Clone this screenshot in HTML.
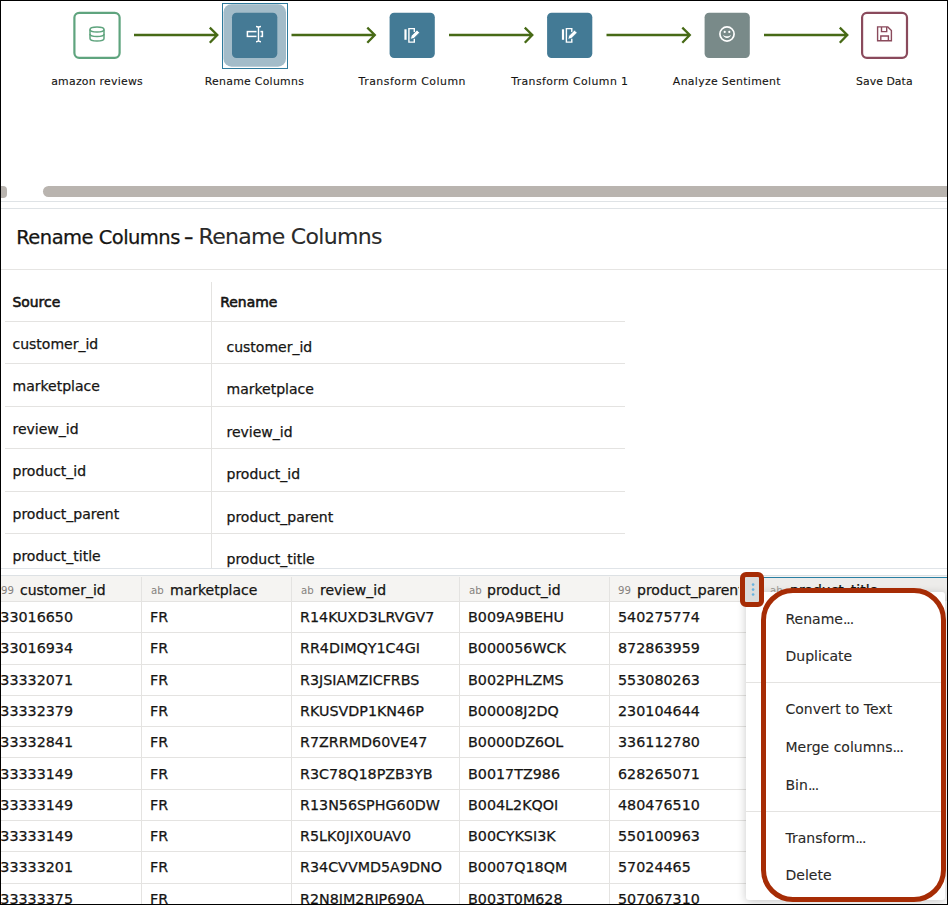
<!DOCTYPE html>
<html>
<head>
<meta charset="utf-8">
<title>Rename Columns</title>
<style>
html,body{margin:0;padding:0;}
body{width:948px;height:905px;position:relative;overflow:hidden;background:#fff;
  font-family:"DejaVu Sans","Liberation Sans",sans-serif;color:#161513;-webkit-text-stroke:0.250px #161513;}
#frame{position:absolute;left:0;top:0;width:946px;height:903px;border:1px solid #000;z-index:50;pointer-events:none;}
.abs{position:absolute;}
.node{position:absolute;top:13px;width:45px;height:45px;border-radius:5px;box-sizing:border-box;}
.node svg{position:absolute;left:0;top:0;}
.lbl{position:absolute;top:74px;width:160px;text-align:center;font-size:10.900px;-webkit-text-stroke:0.120px #161513;line-height:16px;white-space:nowrap;}
.arrow{position:absolute;top:25px;height:20px;}
.hl{position:absolute;height:1px;background:#dfe3e6;}
.src{position:absolute;left:12.500px;font-size:14px;line-height:18px;white-space:nowrap;}
.ren{position:absolute;left:226.500px;font-size:14px;line-height:18px;white-space:nowrap;}
.th{position:absolute;top:578px;height:24px;line-height:24px;font-size:14px;white-space:nowrap;}
.th i{font-style:normal;font-size:10px;color:#77736e;margin-right:6px;position:relative;top:-1px;}
.ti{position:absolute;top:579px;height:24px;line-height:24px;font-size:10.200px;color:#86827e;-webkit-text-stroke:0;white-space:nowrap;}
.td{position:absolute;font-size:14.300px;line-height:20px;white-space:nowrap;}
.vl{position:absolute;width:1px;background:#e4e3e1;top:577px;height:328px;}
.mi{position:absolute;left:785.500px;font-size:14px;line-height:20px;white-space:nowrap;color:#2a2927;-webkit-text-stroke:0.100px #2a2927;}
.el{letter-spacing:-1px;}
</style>
</head>
<body>
<div id="frame"></div>

<!-- flow nodes -->
<svg class="abs" style="left:0;top:0;" width="948" height="110" viewBox="0 0 948 110" fill="none">
<path d="M134.0 35H217.3M209.8 27.600l7.500 7.400-7.500 7.800" stroke="#476a16" stroke-width="2.300" stroke-linejoin="miter"/>
<path d="M291.5 35H374.8M367.3 27.600l7.500 7.400-7.500 7.800" stroke="#476a16" stroke-width="2.300" stroke-linejoin="miter"/>
<path d="M449.0 35H532.3M524.8 27.600l7.500 7.400-7.500 7.800" stroke="#476a16" stroke-width="2.300" stroke-linejoin="miter"/>
<path d="M606.5 35H689.8M682.3 27.600l7.500 7.400-7.500 7.800" stroke="#476a16" stroke-width="2.300" stroke-linejoin="miter"/>
<path d="M764.0 35H847.3M839.8 27.600l7.500 7.400-7.500 7.800" stroke="#476a16" stroke-width="2.300" stroke-linejoin="miter"/>
<rect x="74.400" y="12.800" width="45.200" height="45" rx="4.800" stroke="#5fa47e" stroke-width="2.200" fill="#fff"/>
<g stroke="#5fa47e" stroke-width="1.500"><ellipse cx="97" cy="29.600" rx="7" ry="2.500"/><path d="M90 29.600v9c0 1.400 3.100 2.500 7 2.500s7-1.100 7-2.500v-9"/><path d="M90 34c0 1.400 3.100 2.500 7 2.500s7-1.100 7-2.500"/></g>
<rect x="222.500" y="3.500" width="65" height="65" stroke="#2e7a9c" stroke-width="1"/>
<rect x="223.500" y="4.200" width="62.500" height="62.500" rx="8" fill="#a3bcc9"/>
<rect x="232" y="12.700" width="45.300" height="45.300" rx="4.500" fill="#457a95"/>
<g stroke="#fff" stroke-width="1.500"><rect x="247.400" y="31.600" width="15" height="4.800"/><path d="M258.500 27.500v13.200" stroke="#457a95" stroke-width="4"/><path d="M258.500 27.500v13.200M256 26.500c1.500 0 2.500 .4 2.500 1.400c0-1 1-1.400 2.500-1.400M256 41.700c1.500 0 2.500-.4 2.500-1.400c0 1 1 1.400 2.500 1.400" stroke-width="1.400"/></g>
<rect x="389.6" y="12.700" width="45.200" height="45.300" rx="4.500" fill="#437a95"/>
<g transform="translate(0.0 0)"><path d="M405.500 29.300v10.500" stroke="#fff" stroke-width="2.200"/><path d="M414.300 32v-3.400h-5.400v13.500h5.400v-3.300" stroke="#fff" stroke-width="1.400"/><path d="M410.300 39.300l1-3.500 5.700-5.700 2.600 2.600-5.700 5.700z" fill="#fff" stroke="#437a95" stroke-width="0.800"/></g>
<rect x="547.1" y="12.700" width="45.200" height="45.300" rx="4.500" fill="#437a95"/>
<g transform="translate(157.5 0)"><path d="M405.500 29.300v10.500" stroke="#fff" stroke-width="2.200"/><path d="M414.300 32v-3.400h-5.400v13.500h5.400v-3.300" stroke="#fff" stroke-width="1.400"/><path d="M410.300 39.300l1-3.500 5.700-5.700 2.600 2.600-5.700 5.700z" fill="#fff" stroke="#437a95" stroke-width="0.800"/></g>
<rect x="704.600" y="12.700" width="45.200" height="45.300" rx="4.500" fill="#798a89"/>
<g><circle cx="727" cy="34" r="7.100" stroke="#fff" stroke-width="1.700"/><circle cx="724.700" cy="31.900" r="1.100" fill="#fff"/><circle cx="729.300" cy="31.900" r="1.100" fill="#fff"/><path d="M723 35c.6 1.800 2 2.900 4 2.900s3.400-1.100 4-2.900c-1.200 .9-2.500 1.300-4 1.300s-2.800-.4-4-1.300z" fill="#fff"/></g>
<rect x="862.100" y="12.800" width="44.900" height="45" rx="4.800" stroke="#8a4a5c" stroke-width="2.200" fill="#fff"/>
<g stroke="#8a4a5c" stroke-width="1.400"><path d="M877.600 26.900h10.200l3.600 3.600v10.300h-13.800z"/><path d="M881.500 26.900v4.700h5.200v-4.700M880.800 40.800v-4.800h7.600v4.800"/></g>
</svg>
<div class="lbl" style="left:17.1px;letter-spacing:0.240px;">amazon reviews</div>
<div class="lbl" style="left:174.4px;letter-spacing:0.287px;">Rename Columns</div>
<div class="lbl" style="left:332.3px;letter-spacing:0.501px;">Transform Column</div>
<div class="lbl" style="left:489.8px;letter-spacing:0.419px;">Transform Column 1</div>
<div class="lbl" style="left:646.9px;letter-spacing:0.316px;">Analyze Sentiment</div>
<div class="lbl" style="left:804.3px;letter-spacing:0.059px;">Save Data</div>

<!-- scrollbar -->
<div class="abs" style="left:43px;top:186px;width:920px;height:11px;border-radius:6px;background:#b9b4af;"></div>
<div class="abs" style="left:-4px;top:186px;width:11px;height:11.600px;border-radius:4px;background:#b9b4af;"></div>
<div class="hl" style="left:1px;top:201px;width:946px;"></div>
<div class="hl" style="left:1px;top:208px;width:946px;"></div>

<!-- heading -->
<div class="abs hd" style="left:16.200px;top:220.500px;font-size:19.500px;line-height:32px;white-space:nowrap;letter-spacing:-0.530px;"><span id="h1">Rename Columns</span> <span id="h2" style="font-size:22px;margin-left:0;display:inline-block;transform:scaleX(1.250);transform-origin:70% 50%;">-</span> <span id="h3" style="font-size:22px;letter-spacing:-0.700px;color:#2a2a2a;-webkit-text-stroke:0.100px #2a2a2a;">Rename Columns</span></div>
<div class="hl" style="left:1px;top:269px;width:946px;background:#e6e5e3;"></div>

<!-- rename table -->
<div class="abs" style="left:211px;top:282px;width:1px;height:287px;background:#e4e3e1;"></div>
<div class="src" style="left:12.500px;top:292.600px;font-size:13.900px;-webkit-text-stroke:0.600px #161513;">Source</div>
<div class="ren" style="left:220.300px;top:292.600px;font-size:13.900px;-webkit-text-stroke:0.600px #161513;">Rename</div>
<div class="hl" style="left:5px;top:321px;width:620px;background:#e4e3e1;"></div>
<div class="hl" style="left:5px;top:363px;width:620px;background:#e4e3e1;"></div>
<div class="hl" style="left:5px;top:406px;width:620px;background:#e4e3e1;"></div>
<div class="hl" style="left:5px;top:448px;width:620px;background:#e4e3e1;"></div>
<div class="hl" style="left:5px;top:491px;width:620px;background:#e4e3e1;"></div>
<div class="hl" style="left:5px;top:533px;width:620px;background:#e4e3e1;"></div>
<div class="src" style="top:334.9px;">customer_id</div><div class="ren" style="top:338.2px;">customer_id</div>
<div class="src" style="top:376.9px;">marketplace</div><div class="ren" style="top:380.2px;">marketplace</div>
<div class="src" style="top:419.9px;">review_id</div><div class="ren" style="top:423.2px;">review_id</div>
<div class="src" style="top:461.9px;">product_id</div><div class="ren" style="top:465.2px;">product_id</div>
<div class="src" style="top:504.9px;">product_parent</div><div class="ren" style="top:508.2px;">product_parent</div>
<div class="src" style="top:546.9px;">product_title</div><div class="ren" style="top:550.2px;">product_title</div>

<!-- data grid -->
<div class="hl" style="left:1px;top:568px;width:946px;background:#e0e4e8;"></div>
<div class="abs" style="left:1px;top:575px;width:946px;height:1px;background:#dde1e4;"></div>
<div class="abs" style="left:1px;top:576px;width:946px;height:25px;background:#f5f4f2;"></div>
<div class="abs" style="left:757px;top:576.500px;width:190px;height:1.500px;background:#2a7fa3;"></div>
<div class="abs" style="left:757px;top:578px;width:190px;height:23px;background:#edecea;"></div>
<div id="grid">
<div class="vl" style="left:141px;"></div>
<div class="vl" style="left:291px;"></div>
<div class="vl" style="left:459px;"></div>
<div class="vl" style="left:609px;"></div>
<div class="ti" style="left:1px;">99</div><div class="th" style="left:20px;">customer_id</div>
<div class="ti" style="left:151px;">ab</div><div class="th" style="left:170px;">marketplace</div>
<div class="ti" style="left:301px;">ab</div><div class="th" style="left:320px;">review_id</div>
<div class="ti" style="left:469px;">ab</div><div class="th" style="left:487px;">product_id</div>
<div class="ti" style="left:618px;">99</div><div class="th" style="left:637px;width:101.500px;overflow:hidden;">product_parent</div>
<div class="hl" style="left:1px;top:601.0px;width:756px;background:#e4e3e1;"></div>
<div class="td" style="left:0.3px;top:607.1px;">33016650</div>
<div class="td" style="left:150px;top:607.1px;">FR</div>
<div class="td" style="left:300px;top:607.1px;">R14KUXD3LRVGV7</div>
<div class="td" style="left:468px;top:607.1px;">B009A9BEHU</div>
<div class="td" style="left:618px;top:607.1px;">540275774</div>
<div class="hl" style="left:1px;top:632.3px;width:756px;background:#e4e3e1;"></div>
<div class="td" style="left:0.3px;top:638.4px;">33016934</div>
<div class="td" style="left:150px;top:638.4px;">FR</div>
<div class="td" style="left:300px;top:638.4px;">RR4DIMQY1C4GI</div>
<div class="td" style="left:468px;top:638.4px;">B000056WCK</div>
<div class="td" style="left:618px;top:638.4px;">872863959</div>
<div class="hl" style="left:1px;top:663.6px;width:756px;background:#e4e3e1;"></div>
<div class="td" style="left:0.3px;top:669.7px;">33332071</div>
<div class="td" style="left:150px;top:669.7px;">FR</div>
<div class="td" style="left:300px;top:669.7px;">R3JSIAMZICFRBS</div>
<div class="td" style="left:468px;top:669.7px;">B002PHLZMS</div>
<div class="td" style="left:618px;top:669.7px;">553080263</div>
<div class="hl" style="left:1px;top:694.8px;width:756px;background:#e4e3e1;"></div>
<div class="td" style="left:0.3px;top:700.9px;">33332379</div>
<div class="td" style="left:150px;top:700.9px;">FR</div>
<div class="td" style="left:300px;top:700.9px;">RKUSVDP1KN46P</div>
<div class="td" style="left:468px;top:700.9px;">B00008J2DQ</div>
<div class="td" style="left:618px;top:700.9px;">230104644</div>
<div class="hl" style="left:1px;top:726.1px;width:756px;background:#e4e3e1;"></div>
<div class="td" style="left:0.3px;top:732.2px;">33332841</div>
<div class="td" style="left:150px;top:732.2px;">FR</div>
<div class="td" style="left:300px;top:732.2px;">R7ZRRMD60VE47</div>
<div class="td" style="left:468px;top:732.2px;">B0000DZ6OL</div>
<div class="td" style="left:618px;top:732.2px;">336112780</div>
<div class="hl" style="left:1px;top:757.4px;width:756px;background:#e4e3e1;"></div>
<div class="td" style="left:0.3px;top:763.5px;">33333149</div>
<div class="td" style="left:150px;top:763.5px;">FR</div>
<div class="td" style="left:300px;top:763.5px;">R3C78Q18PZB3YB</div>
<div class="td" style="left:468px;top:763.5px;">B0017TZ986</div>
<div class="td" style="left:618px;top:763.5px;">628265071</div>
<div class="hl" style="left:1px;top:788.7px;width:756px;background:#e4e3e1;"></div>
<div class="td" style="left:0.3px;top:794.8px;">33333149</div>
<div class="td" style="left:150px;top:794.8px;">FR</div>
<div class="td" style="left:300px;top:794.8px;">R13N56SPHG60DW</div>
<div class="td" style="left:468px;top:794.8px;">B004L2KQOI</div>
<div class="td" style="left:618px;top:794.8px;">480476510</div>
<div class="hl" style="left:1px;top:820.0px;width:756px;background:#e4e3e1;"></div>
<div class="td" style="left:0.3px;top:826.1px;">33333149</div>
<div class="td" style="left:150px;top:826.1px;">FR</div>
<div class="td" style="left:300px;top:826.1px;">R5LK0JIX0UAV0</div>
<div class="td" style="left:468px;top:826.1px;">B00CYKSI3K</div>
<div class="td" style="left:618px;top:826.1px;">550100963</div>
<div class="hl" style="left:1px;top:851.2px;width:756px;background:#e4e3e1;"></div>
<div class="td" style="left:0.3px;top:857.3px;">33333201</div>
<div class="td" style="left:150px;top:857.3px;">FR</div>
<div class="td" style="left:300px;top:857.3px;">R34CVVMD5A9DNO</div>
<div class="td" style="left:468px;top:857.3px;">B0007Q18QM</div>
<div class="td" style="left:618px;top:857.3px;">57024465</div>
<div class="hl" style="left:1px;top:882.5px;width:756px;background:#e4e3e1;"></div>
<div class="td" style="left:0.3px;top:888.6px;">33333375</div>
<div class="td" style="left:150px;top:888.6px;">FR</div>
<div class="td" style="left:300px;top:888.6px;">R2N8JM2RIP690A</div>
<div class="td" style="left:468px;top:888.6px;">B003T0M628</div>
<div class="td" style="left:618px;top:888.6px;">507067310</div>
</div><!--endgrid-->

<!-- clip for product_parent header -->
<div class="abs" style="left:741px;top:576px;width:16px;height:25px;background:#f5f4f2;"></div>
<div class="ti" style="left:770px;color:#a09c98;">ab</div><div class="th" style="left:790px;">product_title</div>

<!-- popup menu -->
<div class="abs" style="left:746px;top:591.500px;width:199px;height:308px;background:#fff;border-radius:3px;box-shadow:0 2px 10px rgba(0,0,0,.22);"></div>
<div class="hl" style="left:746px;top:682px;width:199px;background:#e4e3e1;"></div>
<div class="hl" style="left:746px;top:811px;width:199px;background:#e4e3e1;"></div>
<div class="mi" style="top:608.500px;">Rename<span class="el">...</span></div>
<div class="mi" style="top:646.200px;">Duplicate</div>
<div class="mi" style="top:699.200px;">Convert to Text</div>
<div class="mi" style="top:737.200px;">Merge columns<span class="el">...</span></div>
<div class="mi" style="top:774.600px;">Bin<span class="el">...</span></div>
<div class="mi" style="top:827.600px;">Transform<span class="el">...</span></div>
<div class="mi" style="top:865.300px;">Delete</div>

<!-- annotations -->
<div class="abs" style="left:745px;top:577px;width:15px;height:25px;background:#dcdcdb;"></div>
<svg class="abs" style="left:750px;top:580px;" width="6" height="18" viewBox="0 0 6 18" fill="#68b2df"><circle cx="3.100" cy="4.600" r="1.300"/><circle cx="3.100" cy="9.600" r="1.300"/><circle cx="3.100" cy="14.500" r="1.300"/></svg>
<div class="abs" style="left:740.200px;top:572px;width:23.800px;height:34.800px;border:5px solid #a62c05;border-radius:6px;box-sizing:border-box;"></div>
<div class="abs" style="left:761px;top:587.800px;width:185px;height:314px;border:5px solid #a62c05;border-radius:32px;box-sizing:border-box;"></div>

</body>
</html>
